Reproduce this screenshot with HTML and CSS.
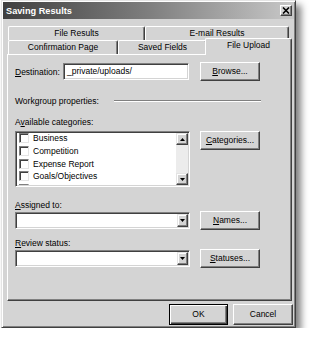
FILE: index.html
```html
<!DOCTYPE html>
<html lang="en">
<head>
    <meta charset="UTF-8">
    <title>Saving Results</title>
    <link rel="stylesheet" href="styles.css">
</head>
<body>
    <div class="dialog">
        <div class="titlebar">
            <span class="title">Saving Results</span>
            <div class="close">
                <svg width="8" height="7" viewBox="0 0 8 7"><path d="M1 0.5 L7 6.5 M7 0.5 L1 6.5" stroke="#000" stroke-width="1.6"/></svg>
            </div>
        </div>
        <div class="content">
            <div class="tab-row back">
                <div class="tab w-results">File Results</div>
                <div class="tab w-email">E-mail Results</div>
            </div>
            <div class="tab-row front">
                <div class="tab w-confirm">Confirmation Page</div>
                <div class="tab w-saved">Saved Fields</div>
                <div class="tab active">File Upload</div>
            </div>

            <div class="panel">
                <div class="row">
                    <div class="left-col dest">
                        <span class="dest-label"><u>D</u>estination:</span>
                        <div class="textbox">_private/uploads/</div>
                    </div>
                    <div class="btn"><u>B</u>rowse...</div>
                </div>

                <div class="group-row">
                    <span>Workgroup properties:</span>
                    <div class="etched"></div>
                </div>

                <div class="label avail">A<u>v</u>ailable categories:</div>
                <div class="row top">
                    <div class="listbox">
                        <div class="items">
                            <div class="item"><span class="check"></span>Business</div>
                            <div class="item"><span class="check"></span>Competition</div>
                            <div class="item"><span class="check"></span>Expense Report</div>
                            <div class="item"><span class="check"></span>Goals/Objectives</div>
                            <div class="item"><span class="check"></span></div>
                        </div>
                        <div class="scrollbar">
                            <div class="sb-btn">
                                <svg width="5" height="3" viewBox="0 0 5 3"><polygon points="2.5,0 5,3 0,3" fill="#000"/></svg>
                            </div>
                            <div class="sb-track"></div>
                            <div class="sb-btn">
                                <svg width="5" height="3" viewBox="0 0 5 3"><polygon points="0,0 5,0 2.5,3" fill="#000"/></svg>
                            </div>
                        </div>
                    </div>
                    <div class="btn"><u>C</u>ategories...</div>
                </div>

                <div class="label assigned"><u>A</u>ssigned to:</div>
                <div class="row">
                    <div class="combo">
                        <div class="combo-text"></div>
                        <div class="sb-btn">
                            <svg width="5" height="3" viewBox="0 0 5 3"><polygon points="0,0 5,0 2.5,3" fill="#000"/></svg>
                        </div>
                    </div>
                    <div class="btn"><u>N</u>ames...</div>
                </div>

                <div class="label review"><u>R</u>eview status:</div>
                <div class="row">
                    <div class="combo">
                        <div class="combo-text"></div>
                        <div class="sb-btn">
                            <svg width="5" height="3" viewBox="0 0 5 3"><polygon points="0,0 5,0 2.5,3" fill="#000"/></svg>
                        </div>
                    </div>
                    <div class="btn"><u>S</u>tatuses...</div>
                </div>
            </div>

            <div class="actions">
                <div class="btn default">OK</div>
                <div class="btn">Cancel</div>
            </div>
        </div>
    </div>
</body>
</html>
```

FILE: styles.css
```css
body {
    margin: 0;
    background: #fff;
    font-family: "Liberation Sans", Arial, sans-serif;
    font-size: 8.5px;
    color: #000;
}
.dialog {
    width: 295px;
    height: 328px;
    margin-left: 1px;
    box-sizing: border-box;
    background: #d4d4d4;
    border: 1px solid;
    border-color: #e4e4e4 #404040 #404040 #e4e4e4;
    box-shadow: inset 1px 1px #fff, inset -1px -1px #808080, 5px 5px 7px rgba(0, 0, 0, 0.5);
    display: flex;
    flex-direction: column;
}
.titlebar {
    height: 17px;
    margin: 1px 1px 0;
    padding: 0 2px 0 3px;
    display: flex;
    align-items: center;
    background: linear-gradient(to right, #404040, #7e7e7e 50%, #c8c8c8);
    color: #fff;
    font-weight: bold;
    font-size: 9.2px;
}
.close {
    margin-left: auto;
    width: 12px;
    height: 11px;
    box-sizing: border-box;
    background: #d4d4d4;
    border: 1px solid;
    border-color: #fff #404040 #404040 #fff;
    box-shadow: inset -1px -1px #808080;
    display: flex;
    align-items: center;
    justify-content: center;
}
.content {
    flex: 1;
    padding: 7px 2px 0 5px;
}
.tab-row {
    display: flex;
    align-items: flex-start;
    height: 14px;
    margin-left: 1px;
}
.tab {
    box-sizing: border-box;
    height: 14px;
    border-top: 1px solid #fff;
    border-left: 1px solid #fff;
    border-right: 1px solid #404040;
    box-shadow: inset -1px 0 #808080;
    border-radius: 2px 2px 0 0;
    text-align: center;
    line-height: 13px;
}
.w-results { width: 137px; }
.w-email { width: 144px; }
.w-confirm { width: 110px; }
.w-saved { width: 89px; }
.tab.active {
    position: relative;
    z-index: 1;
    width: 87px;
    height: 17px;
    margin-top: -2px;
    margin-left: -2px;
    background: #d4d4d4;
    line-height: 13px;
}
.panel {
    width: 285px;
    height: 247px;
    box-sizing: border-box;
    border: 1px solid;
    border-color: #fff #404040 #404040 #fff;
    box-shadow: inset -1px -1px #808080;
    padding: 7px 0 0 7px;
}
.row {
    display: flex;
    align-items: center;
    height: 19px;
}
.row.top {
    align-items: flex-start;
    height: auto;
}
.left-col {
    width: 175px;
}
.dest {
    display: flex;
    align-items: center;
}
.dest-label {
    width: 48px;
}
.textbox {
    width: 126px;
    height: 17px;
    box-sizing: border-box;
    background: #fff;
    border: 1px solid;
    border-color: #808080 #fff #fff #808080;
    box-shadow: inset 1px 1px #404040, inset -1px -1px #d4d4d4;
    padding-left: 3px;
    line-height: 15px;
}
.btn {
    width: 60px;
    height: 19px;
    margin-left: 10px;
    box-sizing: border-box;
    border: 1px solid;
    border-color: #fff #404040 #404040 #fff;
    box-shadow: inset -1px -1px #808080;
    text-align: center;
    line-height: 17px;
}
.group-row {
    display: flex;
    align-items: center;
    height: 12px;
    margin-top: 14px;
}
.etched {
    flex: 1;
    margin: 0 30px 0 15px;
    border-top: 1px solid #808080;
    border-bottom: 1px solid #fff;
}
.label {
    height: 12px;
    line-height: 12px;
}
.avail {
    margin-top: 9px;
    margin-bottom: 3px;
}
.assigned {
    margin-top: 12px;
}
.review {
    margin-top: 7px;
}
.listbox {
    width: 175px;
    height: 56px;
    box-sizing: border-box;
    display: flex;
    background: #fff;
    border: 1px solid;
    border-color: #808080 #fff #fff #808080;
    box-shadow: inset 1px 1px #404040, inset -1px -1px #d4d4d4;
    padding: 1px;
}
.items {
    flex: 1;
    overflow: hidden;
    padding-left: 2px;
}
.item {
    display: flex;
    align-items: center;
    height: 12.7px;
}
.item:first-child {
    margin-top: -1px;
}
.check {
    width: 10px;
    height: 10px;
    box-sizing: border-box;
    margin-right: 4px;
    background: #fff;
    border: 1px solid;
    border-color: #808080 #e4e4e4 #e4e4e4 #808080;
    box-shadow: inset 1px 1px #404040;
}
.scrollbar {
    width: 12px;
    display: flex;
    flex-direction: column;
}
.sb-btn {
    width: 12px;
    height: 12px;
    box-sizing: border-box;
    background: #d4d4d4;
    border: 1px solid;
    border-color: #e4e4e4 #404040 #404040 #e4e4e4;
    box-shadow: inset -1px -1px #808080, inset 1px 1px #fff;
    display: flex;
    align-items: center;
    justify-content: center;
}
.sb-track {
    flex: 1;
    background: #ececec;
}
.combo {
    width: 175px;
    height: 17px;
    box-sizing: border-box;
    display: flex;
    background: #fff;
    border: 1px solid;
    border-color: #808080 #fff #fff #808080;
    box-shadow: inset 1px 1px #404040, inset -1px -1px #d4d4d4;
    padding: 1px;
}
.combo-text {
    flex: 1;
}
.combo .sb-btn {
    width: 11px;
    height: 13px;
}
.actions {
    display: flex;
    justify-content: flex-end;
    gap: 5px;
    margin-top: 3px;
}
.actions .btn {
    height: 21px;
    margin-left: 0;
    line-height: 19px;
}
.actions .btn.default {
    width: 59px;
    border-color: #000;
    box-shadow: inset 1px 1px #fff, inset -1px -1px #404040, inset -2px -2px #808080;
}
```
